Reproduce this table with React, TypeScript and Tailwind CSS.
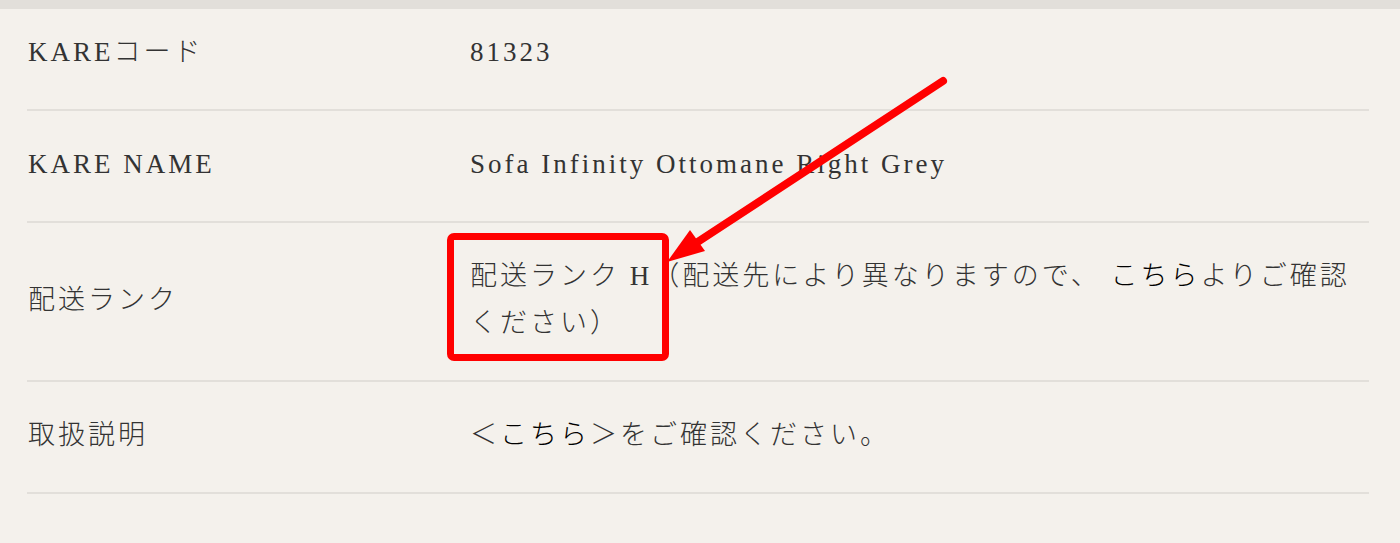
import React from 'react';

interface SpecRow {
  label: string;
  value: React.ReactNode;
}

const rows: SpecRow[] = [
  { label: 'KAREコード', value: '81323' },
  { label: 'KARE NAME', value: 'Sofa Infinity Ottomane Right Grey' },
  {
    label: '配送ランク',
    value: (
      <>
        配送ランク H（配送先により異なりますので、 <span className="text-black">こちら</span>よりご確認ください）
      </>
    ),
  },
  {
    label: '取扱説明',
    value: (
      <>
        ＜<span className="text-black">こちら</span>＞をご確認ください。
      </>
    ),
  },
];

const Row: React.FC<SpecRow & { first?: boolean }> = ({ label, value, first }) => (
  <div
    className={`flex items-center border-b-2 border-[#e2dfda] pb-[33px] ${first ? 'pt-[20px]' : 'pt-[30px]'}`}
  >
    <div className="w-[443px] shrink-0 pl-px">{label}</div>
    <div className="flex-1">{value}</div>
  </div>
);

const App: React.FC = () => (
  <div
    className="relative min-h-screen bg-[#f4f1ec] text-[27px] leading-[47px] tracking-[3px] text-[#333] font-light"
    style={{ fontFamily: '"Liberation Serif", "Noto Sans CJK JP", serif' }}
  >
    <div className="h-[9px] bg-[#e2dfda]" />
    <div className="pl-[27px] pr-[31px]">
      {rows.map((row, i) => (
        <Row key={i} {...row} first={i === 0} />
      ))}
    </div>

    {/* annotation: highlight box + arrow */}
    <div className="absolute left-[447px] top-[233px] w-[222px] h-[128px] border-[7px] border-[#ff0000] rounded-[7px] pointer-events-none" />
    <svg
      className="absolute left-0 top-0 pointer-events-none"
      width="1400"
      height="543"
      viewBox="0 0 1400 543"
    >
      <line x1="943" y1="81" x2="693" y2="245" stroke="#ff0000" strokeWidth="8" strokeLinecap="round" />
      <polygon points="667,262 690,230 705,251" fill="#ff0000" />
    </svg>
  </div>
);

export default App;
